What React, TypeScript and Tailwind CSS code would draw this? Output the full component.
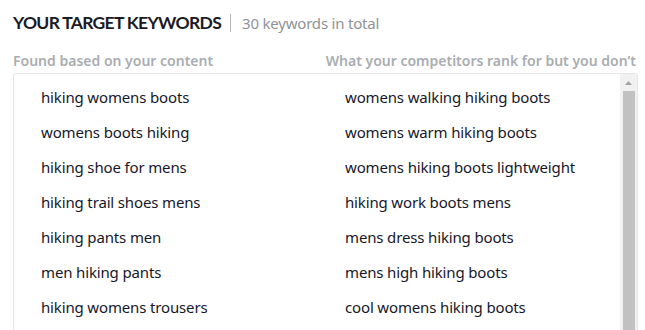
const left = [
  "hiking womens boots",
  "womens boots hiking",
  "hiking shoe for mens",
  "hiking trail shoes mens",
  "hiking pants men",
  "men hiking pants",
  "hiking womens trousers",
];

const right = [
  "womens walking hiking boots",
  "womens warm hiking boots",
  "womens hiking boots lightweight",
  "hiking work boots mens",
  "mens dress hiking boots",
  "mens high hiking boots",
  "cool womens hiking boots",
];

export default function App() {
  return (
    <div className="w-[645px] h-[330px] overflow-hidden bg-white font-['Noto_Sans',sans-serif]">
      <div className="flex items-center pl-[13px] pt-[8px] h-[38px]">
        <span className="text-[17.5px] font-bold text-[#1b1b26] font-[Lato] tracking-[-0.7px]">
          YOUR TARGET KEYWORDS
        </span>
        <span className="ml-[9px] mr-[11px] h-[18px] w-px bg-[#b5b5b5]" />
        <span className="text-[15px] text-[#8f9398] tracking-[-0.2px]">30 keywords in total</span>
      </div>
      <div className="flex justify-between pr-[9px] pl-[13px] mt-[11px] h-[22px] items-center text-[14px] font-semibold text-[#a9adb1]">
        <span>Found based on your content</span>
        <span>What your competitors rank for but you don’t</span>
      </div>
      <div className="ml-[13px] mr-[7px] mt-[2px] h-[300px] border border-[#e6e6e6] rounded-[3px] flex overflow-hidden">
        <div className="flex-1 grid grid-cols-[304px_1fr] pl-[27px] pt-[6px] content-start text-[15px] tracking-[-0.15px] text-[#17172a]">
          {left.map((l, i) => (
            <div key={i} className="contents">
              <div className="h-[35px] flex items-center">{l}</div>
              <div className="h-[35px] flex items-center">{right[i]}</div>
            </div>
          ))}
        </div>
        <div className="w-[17px] bg-[#f1f1f1] flex flex-col items-center">
          <div className="h-[17px] flex items-center justify-center">
            <svg width="7" height="4" viewBox="0 0 7 4">
              <path d="M0 4 L3.5 0 L7 4 Z" fill="#a3a3a3" />
            </svg>
          </div>
          <div className="w-[12px] flex-1 bg-[#c1c1c1]" />
        </div>
      </div>
    </div>
  );
}
